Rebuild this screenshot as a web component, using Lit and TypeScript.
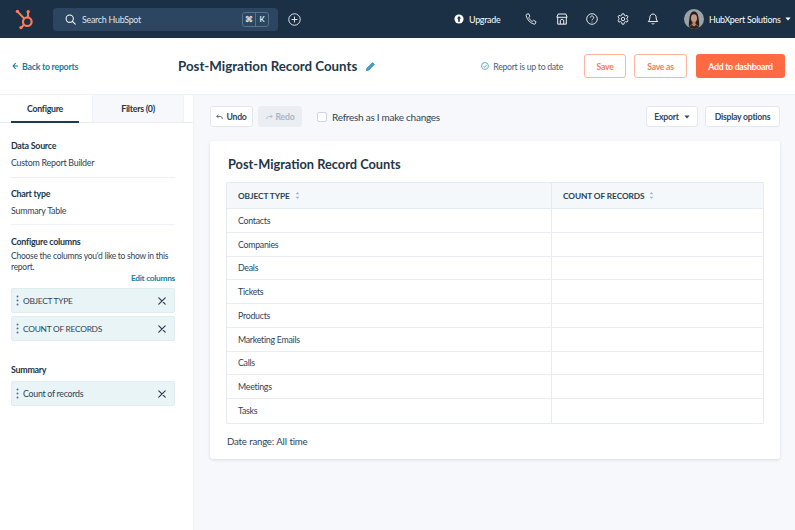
import { LitElement, html, css } from "lit";
import { customElement } from "lit/decorators.js";

const ROWS = ["Contacts","Companies","Deals","Tickets","Products","Marketing Emails","Calls","Meetings","Tasks"];

const sortIcon = html`<svg class="sort" viewBox="0 0 6 10" width="5" height="9"><path d="M3 .8 5.200 3.400H.8z M3 9.200 .8 6.600h4.400z" fill="#a5b4c4"/></svg>`;
const caret = html`<svg viewBox="0 0 8 5" width="6" height="4"><path d="M.5.5h7L4 4.500z" fill="currentColor"/></svg>`;
const dots = html`<svg class="dots" viewBox="0 0 3 11" width="3" height="11"><circle cx="1.500" cy="1.500" r="1" /><circle cx="1.500" cy="5.500" r="1"/><circle cx="1.500" cy="9.500" r="1"/></svg>`;
const cross = html`<svg class="x" viewBox="0 0 10 10" width="8" height="8"><path d="M1 1l8 8M9 1l-8 8" stroke="#2d3e50" stroke-width="1.500" fill="none" stroke-linecap="round"/></svg>`;

function chip(label: string, upper = false) {
  return html`<div class="chip">${dots}<span class="chip-label ${upper ? "upper" : ""}">${label}</span>${cross}</div>`;
}

@customElement("app-root")
export class AppRoot extends LitElement {
  static styles = css`
    :host { display: block; width: 795px; height: 530px; overflow: hidden; font-family: "Lato", "Noto Sans", sans-serif; color: #2f4358; font-size: 8.900px; letter-spacing: -.03em; background: #f6f8fb; }
    svg { display: block; flex: none; }
    .nav { height: 38px; background: #1b3045; display: flex; align-items: center; color: #fff; }
    .logo { margin-left: 13px; }
    .search { flex: none; margin-left: 18px; width: 225px; height: 23px; box-sizing: border-box; background: #2c4560; border-radius: 4px; display: flex; align-items: center; padding: 0 9px 0 12px; gap: 6px; font-size: 8.900px; color: #dfe6ee; }
    .search .grow { flex: 1; }
    .keys { display: flex; height: 13px; border: 1px solid #5a7189; border-radius: 3px; font-size: 7.500px; font-weight: 700; color: #dfe6ee; }
    .keys span { width: 12px; display: flex; align-items: center; justify-content: center; }
    .keys span + span { border-left: 1px solid #5a7189; }
    .plus { margin-left: 10px; }
    .upgrade { flex: none; margin-left: 153px; display: flex; align-items: center; gap: 5px; width: 47px; }
    .nav-icons { flex: none; margin-left: 24px; display: flex; align-items: center; gap: 18.500px; }
    .account { flex: none; margin-left: 25px; display: flex; align-items: center; gap: 5px; white-space: nowrap; }

    .head { height: 57px; background: #fff; display: flex; align-items: center; border-bottom: 1px solid #eef1f6; box-sizing: border-box; }
    .back { margin-left: 12px; display: flex; align-items: center; gap: 4px; color: #0f7fa5; font-weight: 700; font-size: 8.800px; width: 166px; }
    .title { font-size: 13.300px; font-weight: 700; color: #22364a; white-space: nowrap; letter-spacing: 0; }
    .pencil { margin-left: 9px; }
    .status { margin-left: auto; display: flex; align-items: center; gap: 4px; font-size: 8.700px; color: #4a5e72; margin-right: 21px; }
    .btn { height: 24px; box-sizing: border-box; border-radius: 3px; display: flex; align-items: center; justify-content: center; font-size: 8.700px; font-weight: 700; }
    .btn.ghost { border: 1px solid #ffb39d; color: #ff7a59; background: #fff; }
    .btn.save { width: 42px; margin-right: 8px; }
    .btn.saveas { width: 53px; margin-right: 9px; }
    .btn.primary { width: 89px; margin-right: 10px; background: #ff6a43; color: #fff; }

    .body { display: flex; height: 435px; }
    .side { width: 194px; flex: none; background: #fff; border-right: 1px solid #eef1f6; box-sizing: border-box; }
    .tabs { display: flex; height: 28px; border-bottom: 1px solid #e9edf2; box-sizing: border-box; }
    .tab { width: 92px; display: flex; align-items: center; justify-content: center; font-weight: 700; font-size: 8.800px; color: #22364a; box-sizing: border-box; }
    .tab.on { margin-left: 11px; width: 68px; margin-right: 13px; border-bottom: 2px solid #1f3a52; height: 28px; }
    .tab.off { background: #f6f8fb; border-left: 1px solid #eef1f6; border-right: 1px solid #eef1f6; }
    .side-body { padding: 0 18px 0 11px; }
    .label { font-weight: 700; color: #22364a; font-size: 8.900px; line-height: 12px; }
    .value { line-height: 12px; margin-top: 5px; }
    .sect { padding: 17px 0 8px; border-bottom: 1px solid #edf0f4; }
    .sect + .sect { padding: 10px 0 7px; }
    .cfg { padding-top: 11px; }
    .desc { line-height: 11px; margin-top: 3px; font-size: 8.500px; }
    .edit { text-align: right; color: #0f7fa5; font-weight: 700; line-height: 11px; margin-top: 0; font-size: 8.300px; }
    .chip { height: 25px; box-sizing: border-box; margin-top: 3px; background: #e9f4f6; border: 1px solid #deedf0; border-radius: 2px; display: flex; align-items: center; padding: 0 8px 0 4px; }
    .edit + .chip { margin-top: 4px; }
    .dots { fill: #55748e; }
    .chip-label { flex: 1; margin-left: 4px; font-size: 8.800px; }
    .chip-label.upper { font-size: 8.400px; }
    .summary { margin-top: 23px; }
    .summary .chip { margin-top: 5px; }

    .main { flex: 1; padding: 11px 15px 0 16px; min-width: 0; }
    .toolbar { display: flex; align-items: center; height: 21px; }
    .tbtn { height: 21px; box-sizing: border-box; background: #fff; border: 1px solid #e3e8ee; border-radius: 3px; display: flex; align-items: center; justify-content: center; gap: 3px; font-weight: 700; font-size: 8.700px; color: #33475b; }
    .undo { width: 43px; margin-right: 5px; }
    .redo { width: 44px; background: #eaeef2; border-color: #eaeef2; color: #a9b6c2; margin-right: 15px; }
    .check { width: 10px; height: 10px; box-sizing: border-box; border: 1px solid #cbd6e2; border-radius: 2px; background: #fff; margin-right: 5px; }
    .refresh { font-size: 10px; flex: 1; }
    .export { width: 52px; gap: 5px; margin-right: 7px; }
    .display { width: 75px; }
    .card { margin-top: 14px; height: 318px; box-sizing: border-box; background: #fff; border-radius: 3px; box-shadow: 0 1px 3px rgba(45,62,80,.14); padding: 15px 16px 0; }
    .card h2 { margin: 0 0 0 2px; font-size: 12.800px; letter-spacing: 0; line-height: 16px; font-weight: 700; color: #22364a; }
    .table { margin-top: 10px; border: 1px solid #e6ebf1; border-radius: 1px; display: grid; grid-template-columns: 324px 1fr; }
    .th { height: 26px; box-sizing: border-box; background: #f5f8fa; border-bottom: 1px solid #e6ebf1; padding-left: 11px; display: flex; align-items: center; gap: 5px; font-weight: 700; font-size: 8.300px; color: #2d3e50; letter-spacing: -.01em; }
    .td { height: 23.750px; box-sizing: border-box; border-bottom: 1px solid #e9edf3; padding-left: 11px; display: flex; align-items: center; font-size: 8.800px; }
    .td.last { border-bottom: none; }
    .c2 { border-left: 1px solid #e6ebf1; }
    .range { margin: 11px 0 0 1px; font-size: 9.700px; line-height: 12px; word-spacing: .6px; }
  `;

  render() {
    return html`
      <div class="nav">
        <svg class="logo" viewBox="0 0 22 24" width="22" height="24">
          <g fill="none" stroke="#ff7a59" stroke-width="2" stroke-linecap="round">
            <circle cx="14.300" cy="14.700" r="4.300" stroke-width="2.200"/>
            <path d="M15 10V5.500M4.700 4.700l6.300 6.700M10.600 18l-2 2.300"/>
          </g>
          <g fill="#ff7a59"><circle cx="15.200" cy="4.700" r="1.700"/><circle cx="4.400" cy="4.400" r="1.700"/><circle cx="8" cy="20.600" r="1.700"/></g>
        </svg>
        <div class="search">
          <svg viewBox="0 0 14 14" width="11" height="11" fill="none" stroke="#fff" stroke-width="1.300"><circle cx="6" cy="6" r="4.600"/><path d="M9.400 9.400 13 13" stroke-linecap="round"/></svg>
          <span class="grow">Search HubSpot</span>
          <div class="keys"><span>⌘</span><span>K</span></div>
        </div>
        <svg class="plus" viewBox="0 0 14 14" width="13" height="13" fill="none" stroke="#e9eef3" stroke-width="1"><circle cx="7" cy="7" r="6.200"/><path d="M7 3.800v6.400M3.800 7h6.400"/></svg>
        <div class="upgrade">
          <svg viewBox="0 0 12 12" width="10" height="10"><circle cx="6" cy="6" r="5.500" fill="#fff"/><path d="M6 2.400 8.500 5.400H7V9.400H5V5.400H3.500z" fill="#1b3045"/></svg>
          <span>Upgrade</span>
        </div>
        <div class="nav-icons">
          <svg viewBox="0 0 14 14" width="12" height="12" fill="none" stroke="#fff" stroke-width="1"><path d="M2.200 1.300 4.400 1l1.300 3-1.400 1.200c.7 1.900 2.300 3.700 4.300 4.600l1.300-1.300 2.800 1.500-.4 2.200c-.2.7-1 1-1.700.8C5.500 11.400 2.600 8 1.300 3c-.2-.8.2-1.500.9-1.700z" stroke-linejoin="round"/></svg>
          <svg viewBox="0 0 14 14" width="12" height="12" fill="none" stroke="#fff" stroke-width="1.100"><path d="M2.500 1.200h9L13 5H1zM2 5.200V13h10V5.200M5 13V8.500L7 7l2 1.500V13"/></svg>
          <svg viewBox="0 0 14 14" width="12" height="12" fill="none" stroke="#fff" stroke-width="1"><circle cx="7" cy="7" r="6.200"/><path d="M5 5.400c0-2.600 4-2.600 4 0 0 1.600-2 1.600-2 3.200"/><circle cx="7" cy="10.400" r=".6" fill="#fff" stroke="none"/></svg>
          <svg viewBox="0 0 14 14" width="12" height="12" fill="none" stroke="#fff" stroke-width="1"><path d="M5.800 1h2.400l.4 1.700 1.500.7 1.600-.7 1.200 2-1.300 1.200v1.600l1.300 1.200-1.200 2-1.600-.7-1.500.9L8.200 13H5.800l-.4-2.100-1.500-.9-1.600.7-1.200-2 1.300-1.200V5.900L1.100 4.700l1.200-2 1.600.7 1.500-.7z" stroke-linejoin="round"/><circle cx="7" cy="7" r="2"/></svg>
          <svg viewBox="0 0 14 14" width="12" height="12" fill="none" stroke="#fff" stroke-width="1.100"><path d="M7 1.200c-2.500 0-3.700 2-3.700 4.300 0 2.200-.7 3.400-1.800 4.500h11c-1.100-1.100-1.800-2.300-1.800-4.500 0-2.300-1.200-4.300-3.700-4.300zM5.500 12c.5 1.200 2.500 1.200 3 0" stroke-linejoin="round"/></svg>
        </div>
        <div class="account">
          <svg viewBox="0 0 20 20" width="20" height="20">
            <defs><clipPath id="av"><circle cx="10" cy="10" r="10"/></clipPath></defs>
            <g clip-path="url(#av)">
              <rect width="20" height="20" fill="#9aa3a8"/>
              <path d="M5 20c-.5-5 0-8 .5-11C6 4 8 2.500 10 2.500S14 4 14.500 9c.5 3 1 6 .5 11z" fill="#2a1d1a"/>
              <ellipse cx="10" cy="9.200" rx="3" ry="4" fill="#c49a84"/>
              <path d="M8.500 12h3v3l3 2v3h-9v-3l3-2z" fill="#b48a74"/>
              <path d="M5 20c0-2 1.500-3.500 3-4l2 1.500L12 16c1.500.5 3 2 3 4z" fill="#31201d"/>
            </g>
          </svg>
          <span>HubXpert Solutions</span>
          ${caret}
        </div>
      </div>

      <div class="head">
        <div class="back">
          <svg viewBox="0 0 8 10" width="6" height="8" fill="none" stroke="#0f7fa5" stroke-width="1.500"><path d="M5 1 1.500 5 5 9M2 5h6"/></svg>
          <span>Back to reports</span>
        </div>
        <div class="title">Post-Migration Record Counts</div>
        <svg class="pencil" viewBox="0 0 10 10" width="9" height="9"><path d="M7.300.6 9.400 2.700 3 9.100.4 9.600.9 7z" fill="#4f9fc2" stroke="#0f7fa5" stroke-width=".7" stroke-linejoin="round"/></svg>
        <div class="status">
          <svg viewBox="0 0 10 10" width="8" height="8" fill="none" stroke="#3d9bc0" stroke-width="1"><circle cx="5" cy="5" r="4.300"/><path d="M3 5.200 4.500 6.500 7 3.700"/></svg>
          <span>Report is up to date</span>
        </div>
        <div class="btn ghost save">Save</div>
        <div class="btn ghost saveas">Save as</div>
        <div class="btn primary">Add to dashboard</div>
      </div>

      <div class="body">
        <div class="side">
          <div class="tabs">
            <div class="tab on">Configure</div>
            <div class="tab off">Filters (0)</div>
          </div>
          <div class="side-body">
            <div class="sect">
              <div class="label">Data Source</div>
              <div class="value">Custom Report Builder</div>
            </div>
            <div class="sect">
              <div class="label">Chart type</div>
              <div class="value">Summary Table</div>
            </div>
            <div class="cfg">
              <div class="label">Configure columns</div>
              <div class="desc">Choose the columns you'd like to show in this report.</div>
              <div class="edit">Edit columns</div>
              ${chip("OBJECT TYPE", true)}
              ${chip("COUNT OF RECORDS", true)}
            </div>
            <div class="summary">
              <div class="label">Summary</div>
              ${chip("Count of records")}
            </div>
          </div>
        </div>

        <div class="main">
          <div class="toolbar">
            <div class="tbtn undo">
              <svg viewBox="0 0 10 8" width="7" height="6" fill="none" stroke="#33475b" stroke-width="1.100"><path d="M3.500 1 1 3.200l2.500 2M1 3.200h5c2 0 3 1.300 3 3.800"/></svg>Undo
            </div>
            <div class="tbtn redo">
              <svg viewBox="0 0 10 8" width="7" height="6" fill="none" stroke="#a9b6c2" stroke-width="1.100"><path d="M6.500 1 9 3.200l-2.500 2M9 3.200H4c-2 0-3 1.300-3 3.800"/></svg>Redo
            </div>
            <div class="check"></div>
            <div class="refresh">Refresh as I make changes</div>
            <div class="tbtn export">Export ${caret}</div>
            <div class="tbtn display">Display options</div>
          </div>
          <div class="card">
            <h2>Post-Migration Record Counts</h2>
            <div class="table">
              <div class="th">OBJECT TYPE ${sortIcon}</div>
              <div class="th c2">COUNT OF RECORDS ${sortIcon}</div>
              ${ROWS.map((r, i) => html`
                <div class="td ${i === ROWS.length - 1 ? "last" : ""}">${r}</div>
                <div class="td c2 ${i === ROWS.length - 1 ? "last" : ""}"></div>
              `)}
            </div>
            <div class="range">Date range: All time</div>
          </div>
        </div>
      </div>
    `;
  }
}
